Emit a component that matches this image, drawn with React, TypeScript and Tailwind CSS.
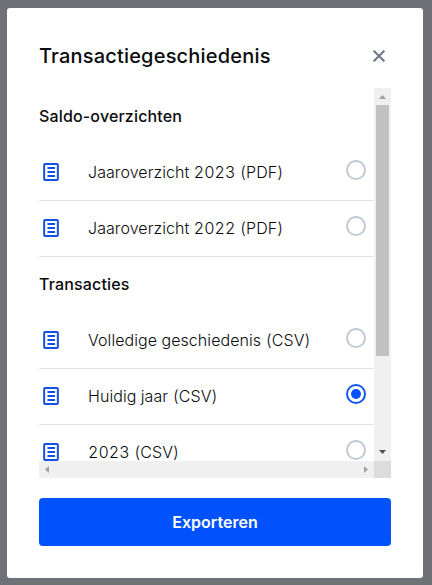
import { useState } from "react";

const sections = [
  {
    title: "Saldo-overzichten",
    items: ["Jaaroverzicht 2023 (PDF)", "Jaaroverzicht 2022 (PDF)"],
  },
  {
    title: "Transacties",
    items: ["Volledige geschiedenis (CSV)", "Huidig jaar (CSV)", "2023 (CSV)"],
  },
];

function DocumentIcon() {
  return (
    <svg width="16" height="18" viewBox="0 0 16 18" fill="none" stroke="#1053e4" strokeWidth="2">
      <rect x="1.150" y="1" width="13.700" height="16" rx="1" />
      <path d="M4.500 5h7.500M4.500 9h7.500M4.500 13h7.500" />
    </svg>
  );
}

function Radio({ checked }: { checked: boolean }) {
  return (
    <span
      className={`flex h-5 w-5 shrink-0 items-center justify-center rounded-full border-2 ${
        checked ? "border-[#1155ee]" : "border-[#bfc8d3]"
      }`}
    >
      {checked && <span className="h-2.5 w-2.5 rounded-full bg-[#0052ff]" />}
    </span>
  );
}

function Row({ label, checked, onSelect }: { label: string; checked: boolean; onSelect: () => void }) {
  return (
    <button
      type="button"
      role="radio"
      aria-checked={checked}
      onClick={onSelect}
      className="flex h-14 w-full shrink-0 items-center border-b border-[#dfe3e9] pr-2 pb-0.5 pl-1 text-left"
    >
      <DocumentIcon />
      <span className="ml-[29px] flex-1 text-base font-light tracking-[0.07px] whitespace-nowrap tabular-nums text-[#0a0b0d]">
        {label}
      </span>
      <span className="mb-[3px]">
        <Radio checked={checked} />
      </span>
    </button>
  );
}

function VerticalBar() {
  return (
    <div className="flex w-[17px] flex-col items-center bg-[#f0f0f0]">
      <svg className="h-[17px] w-[17px] shrink-0" viewBox="0 0 17 17" fill="#a0a0a0">
        <path d="M5 11h7L8.500 7z" />
      </svg>
      <div className="h-[251px] w-[13px] bg-[#c1c1c1]" />
      <svg className="mt-auto h-[17px] w-[17px] shrink-0" viewBox="0 0 17 17" fill="#505050">
        <path d="M5 6h7L8.500 10z" />
      </svg>
    </div>
  );
}

function HorizontalBar() {
  return (
    <div className="flex h-[17px]">
      <div className="flex flex-1 justify-between bg-[#f0f0f0]">
        <svg className="h-[17px] w-[17px]" viewBox="0 0 17 17" fill="#a0a0a0">
          <path d="M10 5v7L6 8.500z" />
        </svg>
        <svg className="h-[17px] w-[17px]" viewBox="0 0 17 17" fill="#a0a0a0">
          <path d="M7 5v7L11 8.500z" />
        </svg>
      </div>
      <div className="w-[17px] bg-[#dcdcdc]" />
    </div>
  );
}

export default function App() {
  const [selected, setSelected] = useState("Huidig jaar (CSV)");
  return (
    <div className="h-[585px] w-[432px] bg-[#707176] pt-2 pl-[7px] font-['Inter','Liberation_Sans',sans-serif] text-[#0a0b0d]">
      <div className="flex h-[570px] w-[416px] flex-col rounded-[3px] bg-white px-8">
        <header className="flex h-20 shrink-0 items-center justify-between pt-4 pr-[6px]">
          <h1 className="text-xl font-medium tracking-[0.19px]">Transactiegeschiedenis</h1>
          <button type="button" aria-label="Sluiten">
            <svg width="12" height="12" viewBox="0 0 12 12" fill="none" stroke="#6a7889" strokeWidth="2">
              <path d="M.6.600l10.800 10.800M11.400.6L.6 11.400" />
            </svg>
          </button>
        </header>
        <div className="flex h-[373px] shrink-0">
          <div className="flex flex-1 flex-col overflow-hidden pt-px">
            {sections.map((section) => (
              <section key={section.title} className="shrink-0">
                <h2 className="flex h-14 items-center pb-[3px] text-base font-medium tracking-[0.16px]">
                  {section.title}
                </h2>
                {section.items.map((label) => (
                  <Row key={label} label={label} checked={selected === label} onSelect={() => setSelected(label)} />
                ))}
              </section>
            ))}
          </div>
          <VerticalBar />
        </div>
        <HorizontalBar />
        <button type="button" className="mt-5 h-12 shrink-0 rounded bg-[#0052ff] text-base font-semibold text-white">
          Exporteren
        </button>
      </div>
    </div>
  );
}
